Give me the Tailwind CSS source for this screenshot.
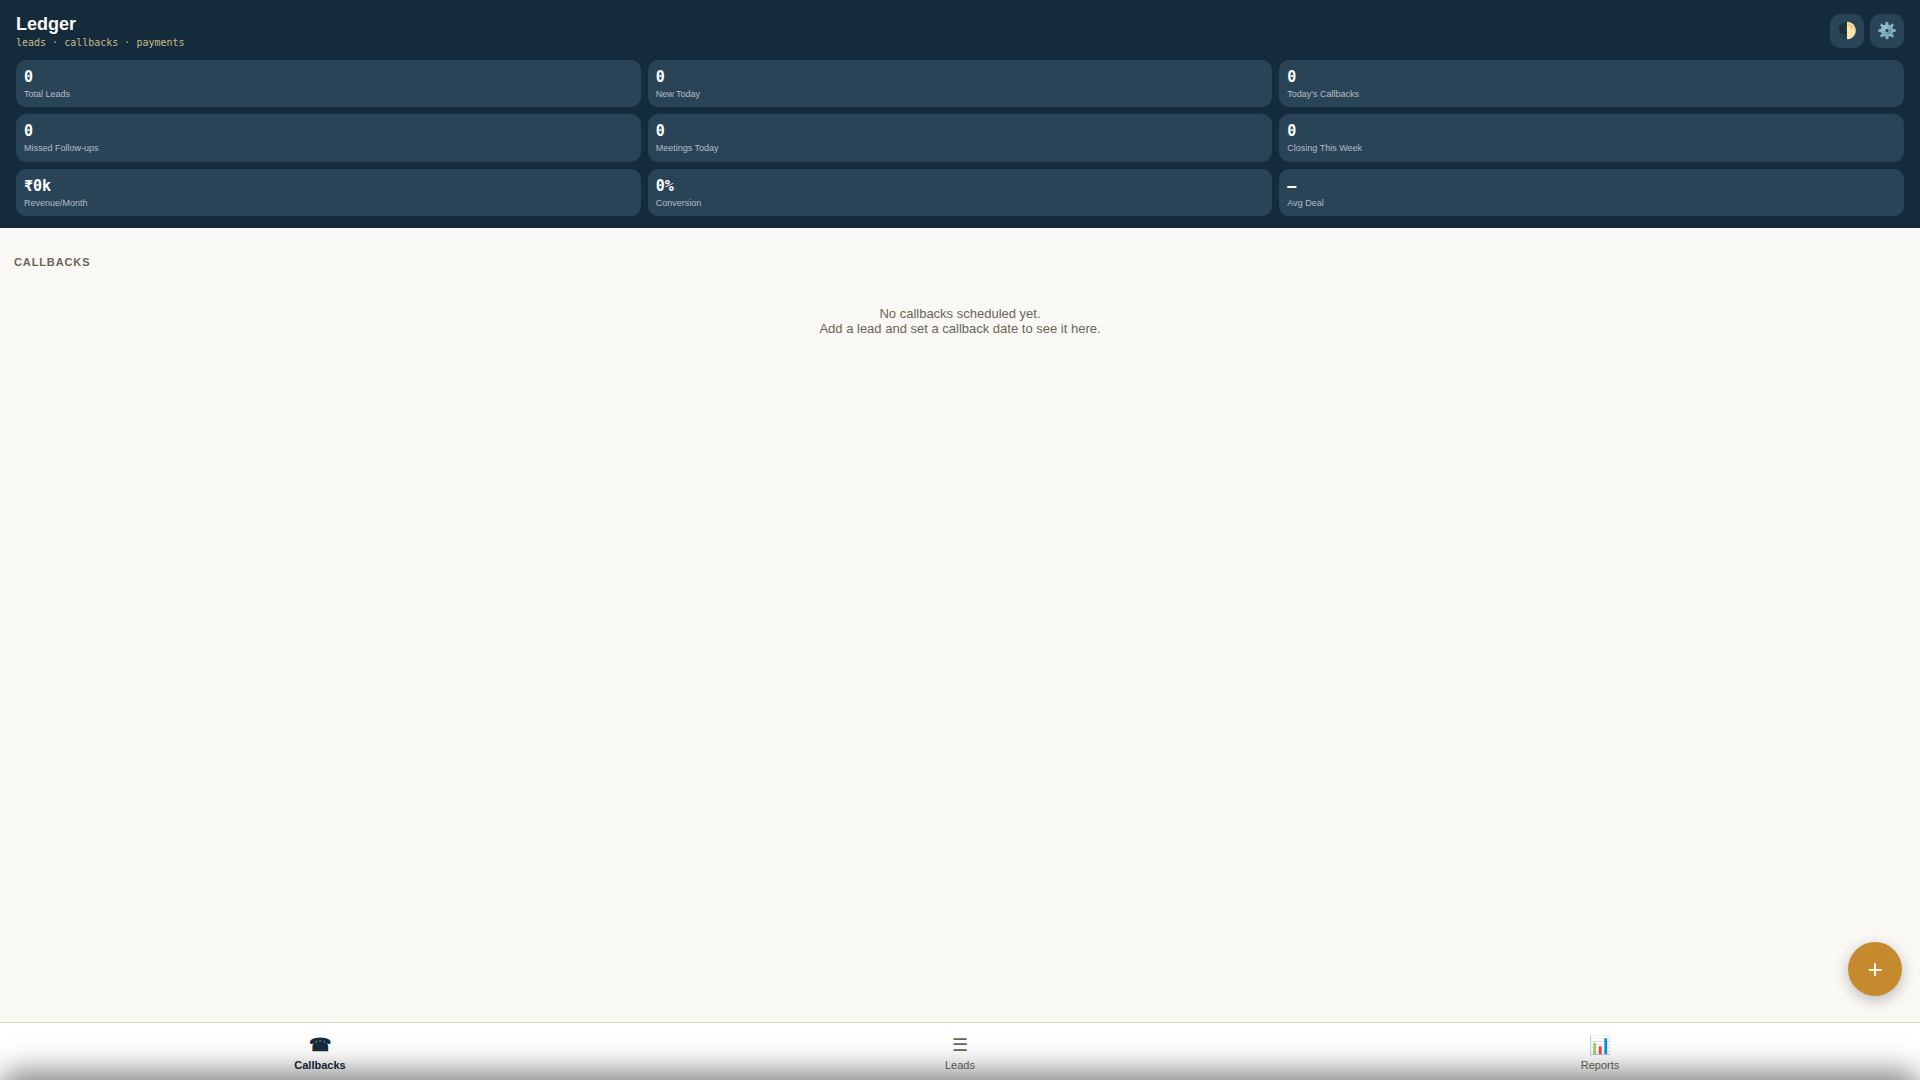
<!DOCTYPE html>
<html lang="en">
<head>
<meta charset="utf-8">
<meta name="viewport" content="width=device-width, initial-scale=1">
<title>Ledger</title>
<script src="https://cdn.jsdelivr.net/npm/@tailwindcss/browser@4"></script>
</head>
<body class="flex h-screen flex-col overflow-hidden bg-[#f9f8f4] font-['Liberation_Sans',Arial,sans-serif] text-[#6b6557]">
  <header class="bg-[#142b3b] px-4 pt-3.5 pb-3 text-white">
    <div class="flex items-start justify-between pb-2">
      <div>
        <h1 class="text-[18px] leading-5 font-bold text-[#f9f8f4]">Ledger</h1>
        <p class="font-['DejaVu_Sans_Mono',monospace] text-[10px] leading-[18px] text-[#c9b989]">leads · callbacks · payments</p>
      </div>
      <div class="flex gap-1.5">
        <button type="button" aria-label="Toggle theme" class="flex size-[34px] items-center justify-center rounded-[10px] bg-[#2a4457] text-[16px] leading-5">🌓</button>
        <button type="button" aria-label="Settings" class="flex size-[34px] items-center justify-center rounded-[10px] bg-[#2a4457] text-[16px] leading-5">⚙️</button>
      </div>
    </div>
    <dl class="grid h-[156px] grid-cols-3 grid-rows-3 gap-[7px]">
      <div class="flex flex-col-reverse justify-end rounded-[10px] bg-[#2a4457] px-2 pt-2"><dt class="text-[9px] leading-4 text-[#b3bec7]">Total Leads</dt><dd class="font-['DejaVu_Sans_Mono',monospace] text-[15px] leading-[18px] font-bold">0</dd></div>
      <div class="flex flex-col-reverse justify-end rounded-[10px] bg-[#2a4457] px-2 pt-2"><dt class="text-[9px] leading-4 text-[#b3bec7]">New Today</dt><dd class="font-['DejaVu_Sans_Mono',monospace] text-[15px] leading-[18px] font-bold">0</dd></div>
      <div class="flex flex-col-reverse justify-end rounded-[10px] bg-[#2a4457] px-2 pt-2"><dt class="text-[9px] leading-4 text-[#b3bec7]">Today's Callbacks</dt><dd class="font-['DejaVu_Sans_Mono',monospace] text-[15px] leading-[18px] font-bold">0</dd></div>
      <div class="flex flex-col-reverse justify-end rounded-[10px] bg-[#2a4457] px-2 pt-2"><dt class="text-[9px] leading-4 text-[#b3bec7]">Missed Follow-ups</dt><dd class="font-['DejaVu_Sans_Mono',monospace] text-[15px] leading-[18px] font-bold">0</dd></div>
      <div class="flex flex-col-reverse justify-end rounded-[10px] bg-[#2a4457] px-2 pt-2"><dt class="text-[9px] leading-4 text-[#b3bec7]">Meetings Today</dt><dd class="font-['DejaVu_Sans_Mono',monospace] text-[15px] leading-[18px] font-bold">0</dd></div>
      <div class="flex flex-col-reverse justify-end rounded-[10px] bg-[#2a4457] px-2 pt-2"><dt class="text-[9px] leading-4 text-[#b3bec7]">Closing This Week</dt><dd class="font-['DejaVu_Sans_Mono',monospace] text-[15px] leading-[18px] font-bold">0</dd></div>
      <div class="flex flex-col-reverse justify-end rounded-[10px] bg-[#2a4457] px-2 pt-2"><dt class="text-[9px] leading-4 text-[#b3bec7]">Revenue/Month</dt><dd class="font-['DejaVu_Sans_Mono',monospace] text-[15px] leading-[18px] font-bold">₹0k</dd></div>
      <div class="flex flex-col-reverse justify-end rounded-[10px] bg-[#2a4457] px-2 pt-2"><dt class="text-[9px] leading-4 text-[#b3bec7]">Conversion</dt><dd class="font-['DejaVu_Sans_Mono',monospace] text-[15px] leading-[18px] font-bold">0%</dd></div>
      <div class="flex flex-col-reverse justify-end rounded-[10px] bg-[#2a4457] px-2 pt-2"><dt class="text-[9px] leading-4 text-[#b3bec7]">Avg Deal</dt><dd class="font-['DejaVu_Sans_Mono',monospace] text-[15px] leading-[18px] font-bold">—</dd></div>
    </dl>
  </header>

  <main class="flex-1 px-3.5 pt-7">
    <h2 class="text-[11px] leading-3 font-bold tracking-[0.08em] uppercase">Callbacks</h2>
    <p class="pt-9.5 text-center text-[13px] leading-[15px]">No callbacks scheduled yet.<br>Add a lead and set a callback date to see it here.</p>
  </main>

  <nav class="grid h-[58px] grid-cols-3 border-t border-[#ddd5c0] bg-white text-[11px]">
    <a href="#callbacks" aria-current="page" class="flex flex-col items-center pt-3 font-bold text-[#142b3b]"><span class="text-[18px] leading-5">☎</span><span class="pt-1 leading-3">Callbacks</span></a>
    <a href="#leads" class="flex flex-col items-center pt-3"><span class="text-[18px] leading-5">☰</span><span class="pt-1 leading-3">Leads</span></a>
    <a href="#reports" class="flex flex-col items-center pt-3"><span class="text-[18px] leading-5">📊</span><span class="pt-1 leading-3">Reports</span></a>
  </nav>

  <button type="button" aria-label="Add lead" class="fixed right-[18px] bottom-[84px] flex size-[54px] items-center justify-center rounded-full bg-[#c58a2e] text-[26px] leading-none text-white shadow-[0_4px_14px_rgba(0,0,0,0.25)]">+</button>

  <!-- Closed bottom sheet: only its shadow shows above the window's lower edge -->
  <div class="pointer-events-none fixed inset-x-0 top-full h-96 rounded-t-[18px] shadow-[0_-8px_30px_rgba(0,0,0,0.5)]"></div>
</body>
</html>
